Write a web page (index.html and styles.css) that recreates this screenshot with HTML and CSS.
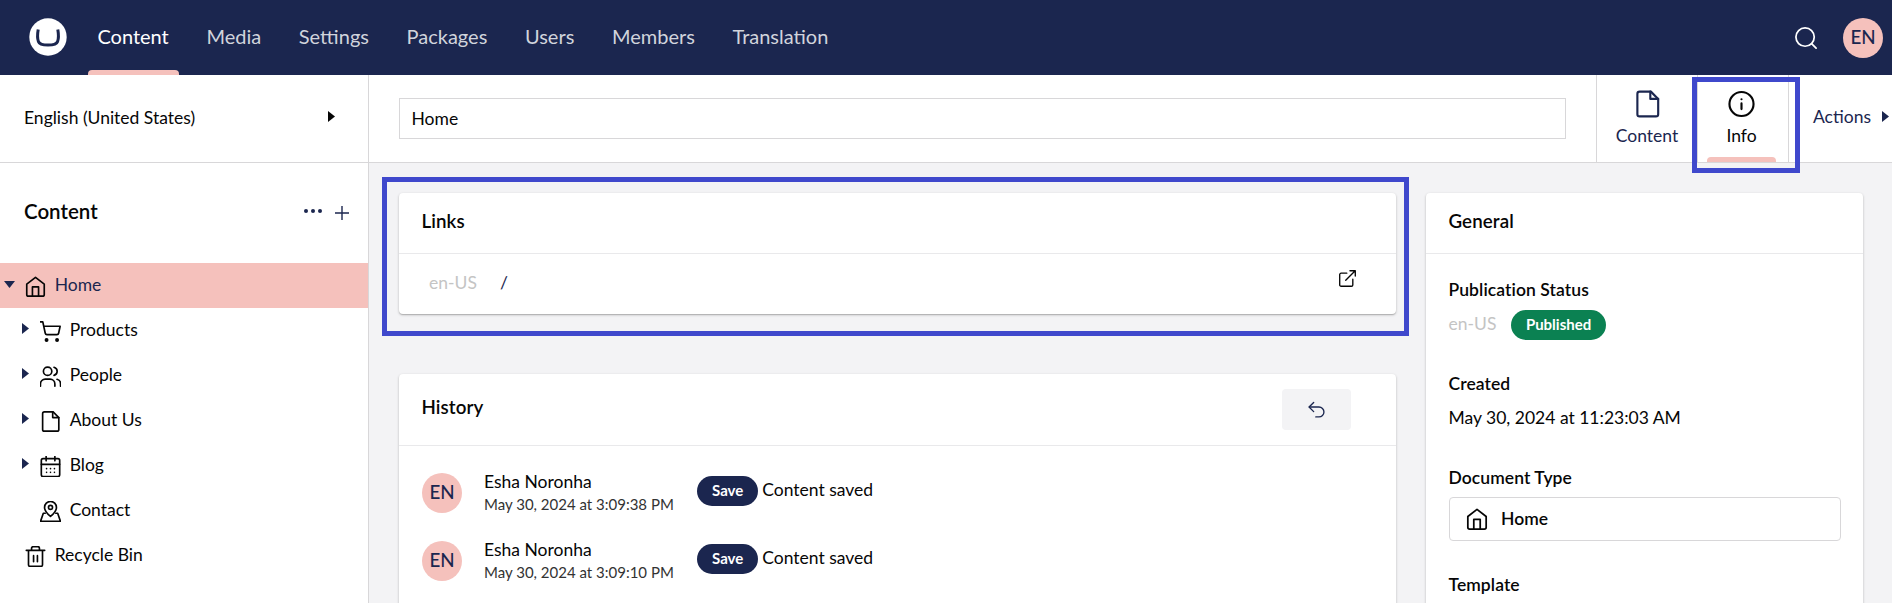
FILE: index.html
```html
<!DOCTYPE html>
<html lang="en">
<head>
<meta charset="utf-8">
<title>Home - Umbraco</title>
<link rel="stylesheet" href="styles.css">
</head>
<body>
<svg width="0" height="0" class="sprite">
  <symbol id="home" viewBox="0 0 24 24"><path d="M2 9.300 12 1.500l10 7.800V21a2 2 0 0 1-2 2H4a2 2 0 0 1-2-2z"/><path d="M8.500 23V12.500h7V23"/></symbol>
  <symbol id="cart" viewBox="0 0 24 24"><g fill="currentColor"><circle cx="7.500" cy="21.700" r="1.300"/><circle cx="19.500" cy="21.700" r="1.300"/></g><path d="M.5 1h2.700l2.800 13a2 2 0 0 0 2 1.600h11.300a2 2 0 0 0 2-1.600L23 6H4.500"/></symbol>
  <symbol id="people" viewBox="0 0 24 24"><path d="M17 23v-2.500a5.500 5.500 0 0 0-5.500-5.500H6a5.500 5.500 0 0 0-5.500 5.500V23"/><circle cx="8.700" cy="6" r="4.800"/><path d="M23.500 23v-2.500a5.500 5.500 0 0 0-4-5.300M16 1.400a4.800 4.800 0 0 1 0 9.300"/></symbol>
  <symbol id="doc" viewBox="0 0 24 24"><path d="M15 1H5a2 2 0 0 0-2 2v18a2 2 0 0 0 2 2h14.500a2 2 0 0 0 2-2V7.500z"/><path d="M14.500 1v6.500h7"/></symbol>
  <symbol id="calendar" viewBox="0 0 24 24"><rect x="1.500" y="3" width="21" height="20.500" rx="2"/><path d="M7 .5v5M17 .5v5M1.500 9.500h21"/><path d="M7.500 14.500h.01M12 14.500h.01M16.500 14.500h.01M7.500 18.700h.01M12 18.700h.01M16.500 18.700h.01"/></symbol>
  <symbol id="pin" viewBox="0 0 24 24"><path d="M18.800 7.300c0 5-6.800 10.200-6.800 10.200S5.200 12.300 5.200 7.300a6.800 6.800 0 0 1 13.600 0z"/><circle cx="12" cy="7.300" r="2.300"/><path d="M6 14H3.800L.6 23.300h22.800L20.200 14H18"/></symbol>
  <symbol id="trash" viewBox="0 0 24 24"><path d="M1.500 5h21M20 5v16.300a2 2 0 0 1-2 2H6a2 2 0 0 1-2-2V5M7.500 5V2.700a2 2 0 0 1 2-2h5a2 2 0 0 1 2 2V5M9.800 11v7M14.200 11v7"/></symbol>
  <symbol id="info" viewBox="0 0 24 24"><circle cx="12" cy="12" r="10.700"/><path d="M12 16.500v-5M12 7.800h.01"/></symbol>
  <symbol id="search" viewBox="0 0 24 24"><circle cx="11" cy="11" r="10"/><path d="m23 23-4.900-4.900"/></symbol>
  <symbol id="external" viewBox="0 0 24 24"><path d="M19.500 13v8a2 2 0 0 1-2 2H3a2 2 0 0 1-2-2V6.500a2 2 0 0 1 2-2h8M15.500 1H23v7.500M9.500 14.500 22.500 1.500"/></symbol>
  <symbol id="undo" viewBox="0 0 24 24"><path d="M8 15 1.500 8.500 8 2"/><path d="M2 8.500h13.500a7 7 0 0 1 0 14H11"/></symbol>
</svg>

<header class="topbar">
  <svg class="logo" viewBox="0 0 38 38"><circle cx="19" cy="19" r="18.700" fill="#fff"/><path d="M9.200 11.500c-.8 4.500-.9 9 .2 12 .8 2.500 3.600 3.600 9.600 3.600s8.800-1.100 9.600-3.600c1.100-3 1-7.500.2-12" fill="none" stroke="#1b264f" stroke-width="3"/></svg>
  <nav class="sections">
    <a class="section active">Content</a><a class="section">Media</a><a class="section">Settings</a><a class="section">Packages</a><a class="section">Users</a><a class="section">Members</a><a class="section">Translation</a>
  </nav>
  <svg class="icon search"><use href="#search"/></svg>
  <div class="avatar">EN</div>
</header>

<div class="app">
  <aside class="sidebar">
    <div class="language"><span>English (United States)</span><i class="caret dark"></i></div>
    <div class="tree-head"><h2>Content</h2><span class="dots"><i></i><i></i><i></i></span><svg class="plus" viewBox="0 0 14 14"><path d="M7 0v14M0 7h14"/></svg></div>
    <ul class="tree">
      <li class="node selected"><i class="caret down"></i><svg class="icon"><use href="#home"/></svg><span>Home</span></li>
      <li class="node child"><i class="caret"></i><svg class="icon"><use href="#cart"/></svg><span>Products</span></li>
      <li class="node child"><i class="caret"></i><svg class="icon"><use href="#people"/></svg><span>People</span></li>
      <li class="node child"><i class="caret"></i><svg class="icon"><use href="#doc"/></svg><span>About Us</span></li>
      <li class="node child"><i class="caret"></i><svg class="icon"><use href="#calendar"/></svg><span>Blog</span></li>
      <li class="node child"><i class="caret none"></i><svg class="icon"><use href="#pin"/></svg><span>Contact</span></li>
      <li class="node"><i class="caret none"></i><svg class="icon"><use href="#trash"/></svg><span>Recycle Bin</span></li>
    </ul>
  </aside>

  <main class="editor">
    <div class="editor-head">
      <input class="name" value="Home">
      <a class="tab tab-content"><svg class="icon"><use href="#doc"/></svg><span>Content</span></a>
      <a class="tab tab-info"><svg class="icon"><use href="#info"/></svg><span>Info</span><b class="highlight"></b></a>
      <a class="actions"><span>Actions</span><i class="caret"></i></a>
    </div>
    <div class="columns">
      <div class="main-col">
        <section class="card links">
          <h3 class="card-head">Links</h3>
          <div class="link-row"><span class="culture">en-US</span><span class="url">/</span><svg class="icon"><use href="#external"/></svg></div>
          <b class="highlight"></b>
        </section>
        <section class="card history">
          <div class="card-head tall"><h3>History</h3><button class="rollback"><svg class="icon"><use href="#undo"/></svg></button></div>
          <div class="entry"><div class="avatar">EN</div><div class="who"><div>Esha Noronha</div><time>May 30, 2024 at 3:09:38 PM</time></div><span class="tag">Save</span><span class="what">Content saved</span></div>
          <div class="entry"><div class="avatar">EN</div><div class="who"><div>Esha Noronha</div><time>May 30, 2024 at 3:09:10 PM</time></div><span class="tag">Save</span><span class="what">Content saved</span></div>
        </section>
      </div>
      <section class="card general">
        <h3 class="card-head">General</h3>
        <dl class="facts">
          <dt>Publication Status</dt>
          <dd class="status"><span class="culture">en-US</span><span class="tag published">Published</span></dd>
          <dt>Created</dt>
          <dd class="created">May 30, 2024 at 11:23:03 AM</dd>
          <dt>Document Type</dt>
          <dd class="doctype"><svg class="icon"><use href="#home"/></svg><span>Home</span></dd>
          <dt>Template</dt>
        </dl>
      </section>
    </div>
  </main>
</div>
</body>
</html>
```
FILE: styles.css
```css
* { box-sizing: border-box; }
body { margin: 0; width: 1892px; height: 603px; overflow: hidden; font: 17.5px/24px Lato, sans-serif; color: #060606; background: #fff; }
h2, h3, ul, dl, dd { margin: 0; padding: 0; }
.sprite { display: block; position: absolute; }
.icon { width: 22px; height: 22px; flex: none; fill: none; stroke: currentColor; stroke-width: 1.9; stroke-linecap: round; stroke-linejoin: round; overflow: visible; }

.topbar { height: 75px; display: flex; align-items: center; background: #1b264f; padding: 0 9px 0 28.500px; }
.logo { width: 38px; height: 38px; margin: -1px 12px 0 0; }
.sections { display: flex; height: 75px; flex: 1; }
.section { position: relative; padding: 0 18.75px 0 18.9px; font-size: 20px; line-height: 73px; color: #d1d4dc; }
.section.active { color: #fff; }
.section.active::after { content: ""; position: absolute; left: 9.500px; right: 9px; bottom: 0; height: 5px; background: #f5c1bc; border-radius: 4px 4px 0 0; }
.search { color: #fff; margin-right: 26px; }
.avatar { width: 40px; height: 40px; border-radius: 50%; background: #f5c1bc; color: #1b264f; font-size: 18.75px; font-weight: 500; line-height: 37px; text-align: center; flex: none; }

.app { display: flex; height: 528px; overflow: hidden; }
.sidebar { width: 369px; flex: none; border-right: 1px solid #d8d7d9; }
.language { height: 88px; border-bottom: 1px solid #d8d7d9; display: flex; align-items: center; justify-content: space-between; padding: 0 33px 2px 24px; }
.caret { width: 7px; height: 11px; flex: none; background: #1b264f; clip-path: polygon(0 0, 100% 50%, 0 100%); }
.caret.dark { background: #060606; margin-top: -2px; }
.caret.down { width: 11px; height: 7px; clip-path: polygon(0 0, 100% 0, 50% 100%); }
.caret.none { visibility: hidden; }
.tree-head { height: 100px; display: flex; align-items: center; padding: 0 19px 0 24px; }
.tree-head h2 { flex: 1; font-size: 20.5px; font-weight: 600; margin-top: -4px; }
.dots { display: flex; gap: 3px; margin: -4px 13px 0 0; }
.dots i { width: 4px; height: 4px; border-radius: 50%; background: #1b264f; }
.plus { width: 14px; height: 14px; stroke: #1b264f; stroke-width: 1.4; }
.tree { list-style: none; }
.node { height: 45px; display: flex; align-items: center; padding-left: 4px; }
.node .caret { width: 11px; margin-right: 6px; }
.node .icon { width: 21px; height: 21px; margin: 1px 8.700px 0 4px; }
.node span { margin-top: -2px; }
.node.selected { background: #f5c1bc; }
.node.selected span { color: #1b264f; }
.node.selected .caret { margin-top: -2px; }
.node.child { padding-left: 22px; }
.node.child .caret { width: 7px; margin: -4px 7px 0 0; }

.editor { flex: 1; min-width: 0; background: #f3f3f5; }
.editor-head { height: 88px; display: flex; background: #fff; border-bottom: 1px solid #d8d7d9; }
.name { margin: 23px 30px 0; width: 1167px; height: 41px; border: 1px solid #d8d7d9; padding: 0 12px 0 11.500px; font: inherit; color: inherit; outline: 0; }
.tab { position: relative; display: flex; flex-direction: column; align-items: center; padding-top: 15px; border-left: 1px solid #d8d7d9; }
.tab .icon { width: 27px; height: 28px; margin-bottom: 6px; }
.tab-content { width: 101px; color: #1b264f; }
.tab-info { width: 92px; padding-right: 3px; border-right: 1px solid #d8d7d9; }
.tab-info::after { content: ""; position: absolute; left: 9px; width: 69px; bottom: 0; height: 5px; background: #f5c1bc; border-radius: 4px 4px 0 0; }
.highlight { position: absolute; border: 5px solid #3f48cc; }
.tab-info .highlight { left: -6px; top: 2px; width: 108px; height: 96px; z-index: 1; }
.actions { display: flex; align-items: center; gap: 11px; padding: 0 0 4px 24px; color: #1b264f; }

.columns { display: flex; gap: 30px; padding: 30px 29px 0 30px; }
.main-col { width: 997px; display: flex; flex-direction: column; gap: 60px; }
.card { position: relative; background: #fff; border-radius: 4px; box-shadow: 0 1px 3px rgba(0,0,0,.2), 0 1px 1px rgba(0,0,0,.16); }
.card-head { height: 61px; border-bottom: 1px solid #e9e9eb; padding: 0 22.500px; font-size: 18.75px; font-weight: 600; line-height: 56px; letter-spacing: .08px; }
.card-head.tall { height: 72px; display: flex; justify-content: space-between; padding-right: 45px; line-height: 66px; }
.card-head h3 { font: inherit; }
.rollback { width: 69px; height: 41px; margin-top: 15px; padding: 0; border: 0; border-radius: 4px; background: #f3f3f5; display: grid; place-items: center; color: #1b264f; }
.rollback .icon { width: 17px; height: 17px; }
.links { height: 121px; }
.links .highlight { left: -17px; top: -16px; width: 1027px; height: 159px; }
.link-row { display: flex; align-items: center; padding: 17px 39px 0 30px; }
.culture { color: #c4c4c4; }
.url { margin-left: 23px; flex: 1; color: #1b264f; }
.link-row .icon { width: 17px; height: 17px; margin: -9px 1px 0 0; }
.history { height: 260px; }
.entry { height: 68px; display: flex; padding: 0 23px; }
.entry:nth-child(2) { margin-top: 27px; }
.who { width: 213px; flex: none; margin: -3px 0 0 22px; }
.who div { line-height: 24px; }
time { display: block; font-size: 15px; line-height: 21px; color: #333; white-space: nowrap; }
.tag { height: 30px; border-radius: 15px; background: #1b264f; color: #fff; font-size: 15px; font-weight: 700; line-height: 29px; padding: 0 15px; margin: 3px 4px 0 0; }
.what { margin-top: 5px; }

.general { width: 437px; height: 450px; }
.facts { padding: 24px 22px 0 22.500px; }
dt { font-weight: 600; line-height: 24px; letter-spacing: .08px; font-variant-ligatures: common-ligatures; }
dd { display: flex; align-items: center; }
.status { height: 40px; padding-top: 5px; margin-bottom: 30px; }
.status .culture { margin: -2px 14.500px 0 0; }
.tag.published { background: #0b8152; padding: 0 15px; margin: 0; line-height: 28px; }
.created { height: 44px; margin-bottom: 26px; }
.doctype { height: 44px; margin: 7px 0 32px; border: 1px solid #d8d7d9; border-radius: 4px; padding-left: 16.500px; gap: 13px; font-weight: 600; }
```
